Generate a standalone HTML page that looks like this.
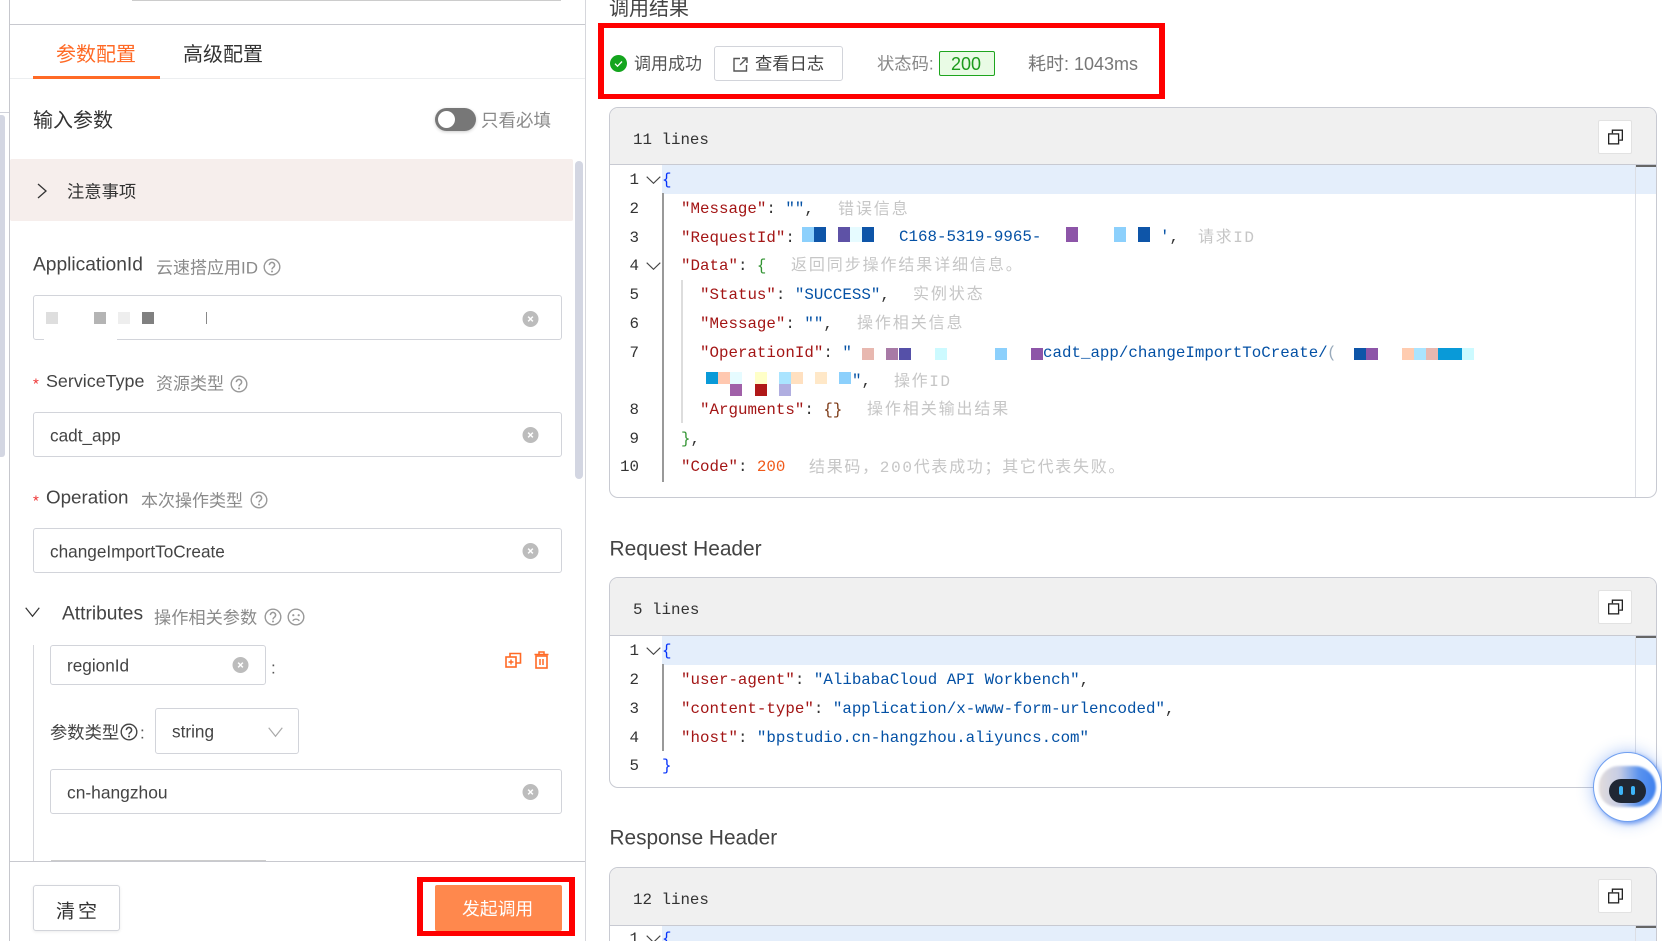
<!DOCTYPE html>
<html lang="zh"><head><meta charset="utf-8"><title>调用结果</title>
<style>
html,body{margin:0;padding:0;width:1662px;height:941px;overflow:hidden;background:#fff}
body{position:relative;font-family:"Liberation Sans","Noto Sans CJK SC",sans-serif;color:#333}
.t{position:absolute;white-space:nowrap;line-height:1;transform:translateY(-50%)}
.b{position:absolute;box-sizing:border-box}
.inp{position:absolute;box-sizing:border-box;border:1px solid #d2d4da;border-radius:3px;background:#fff}
.h{color:#8a8a8a;font-size:17px}
.l{color:#444;font-size:18.5px}
.v{color:#444;font-size:17.2px}
.r{color:#e33;font-size:15px}
.m{position:absolute;font-family:"Liberation Mono","Noto Sans CJK SC",monospace;font-size:15.82px;line-height:1;white-space:pre;transform:translateY(-50%);color:#333}
.n{left:601px;width:38px;text-align:right;color:#333}
.k{color:#a31515}.s{color:#0451a5}
.c{color:#c6c6c6;font-size:16px;letter-spacing:1.9px}
.box{position:absolute;left:609px;width:1048px;box-sizing:border-box;border:1px solid #c8cad2;border-radius:9px;overflow:hidden;background:#fff}
.head{position:absolute;left:0;top:0;right:0;background:#f0f0f0;border-bottom:1px solid #c8cad2}
.hl{position:absolute;left:52px;right:0;height:29px;background:#e4eefb}
.min{position:absolute;left:1025px;width:1px;bottom:0;background:#dcdee4}
.mark{position:absolute;left:1026px;right:0;height:2px;background:#666}
.cp{position:absolute;left:1598px;width:34px;height:34px;background:#fff;border:1px solid #e2e2e2;border-radius:2px;box-sizing:border-box}
.g{position:absolute;width:1.5px}
svg{position:absolute;overflow:visible}
.q{position:absolute;width:12px;height:12px}
</style></head><body>
<svg width="0" height="0" style="position:absolute"><defs>
<symbol id="help" viewBox="0 0 18 18"><circle cx="9" cy="9" r="7.8" fill="none" stroke="currentColor" stroke-width="1.4"/><path d="M6.4 7.1a2.6 2.6 0 1 1 4.2 2c-.9.7-1.6 1.1-1.6 2.3" fill="none" stroke="currentColor" stroke-width="1.5"/><circle cx="9" cy="13.5" r="1" fill="currentColor"/></symbol>
<symbol id="clr" viewBox="0 0 17 17"><circle cx="8.5" cy="8.5" r="8.5" fill="#bcbcbc"/><path d="M6 6l5 5M11 6l-5 5" stroke="#fff" stroke-width="1.6"/></symbol>
<symbol id="copy" viewBox="0 0 16 16"><rect x=".7" y="4.7" width="10.6" height="10.6" fill="none" stroke="#222" stroke-width="1.4"/><path d="M4.7 4V.7h10.6v10.6H12" fill="none" stroke="#222" stroke-width="1.4"/></symbol>
<symbol id="chev" viewBox="0 0 15 8"><path d="M.7.7l6.8 6.6L14.3.7" fill="none" stroke="#444" stroke-width="1.1"/></symbol>
</defs></svg>

<!-- left panel frame -->
<div class="b" style="left:9px;top:0;width:1px;height:941px;background:#c6c7cd"></div>
<div class="b" style="left:585px;top:0;width:1px;height:941px;background:#d6d7dc"></div>
<div class="b" style="left:132px;top:0;width:429px;height:1px;background:#ccc"></div>
<div class="b" style="left:10px;top:24px;width:575px;height:1px;background:#c8c9cf"></div>
<div class="b" style="left:0;top:112px;width:9px;height:1px;background:#d0d2da"></div>
<div class="b" style="left:0;top:115px;width:5px;height:342px;background:#d3d6e2;border-radius:0 3px 3px 0"></div>
<div class="b" style="left:575px;top:161px;width:8px;height:318px;background:#d3d6e2;border-radius:4px"></div>

<!-- tabs -->
<div class="t" style="left:56px;top:55px;font-size:20px;color:#ff6a26">参数配置</div>
<div class="t" style="left:183px;top:55px;font-size:20px;color:#333">高级配置</div>
<div class="b" style="left:10px;top:78px;width:575px;height:1px;background:#eceef0"></div>
<div class="b" style="left:33px;top:76px;width:127px;height:3px;background:#ff6a26"></div>

<div class="t" style="left:33px;top:121px;font-size:20px;color:#333">输入参数</div>
<div class="b" style="left:435px;top:108px;width:41px;height:23px;background:#777;border-radius:12px;box-shadow:0 1px 3px rgba(0,0,0,.2)"><div class="b" style="left:3px;top:3px;width:17px;height:17px;background:#fff;border-radius:50%"></div></div>
<div class="t" style="left:481px;top:121px;font-size:17.5px;color:#8a8a8a">只看必填</div>

<div class="b" style="left:10px;top:159px;width:563px;height:62px;background:#f6eeec;border-radius:2px"></div>
<svg style="left:37px;top:183px" width="10" height="16"><path d="M1 1l8 7-8 7" fill="none" stroke="#333" stroke-width="1.3"/></svg>
<div class="t" style="left:67px;top:192px;font-size:17.3px;color:#333">注意事项</div>

<!-- ApplicationId -->
<div class="t l" style="left:33px;top:265px;font-size:19.2px">ApplicationId</div>
<div class="t h" style="left:156px;top:268px">云速搭应用ID</div>
<svg style="left:263px;top:258px;color:#999" width="18" height="18"><use href="#help"/></svg>
<div class="inp" style="left:33px;top:295px;width:529px;height:45px"></div>
<div class="b" style="left:44px;top:338px;width:73px;height:3px;background:#fff"></div>
<div class="b" style="left:46px;top:312px;width:12px;height:12px;background:#dedede"></div>
<div class="b" style="left:94px;top:312px;width:12px;height:12px;background:#b4b4b4"></div>
<div class="b" style="left:118px;top:312px;width:12px;height:12px;background:#eee"></div>
<div class="b" style="left:142px;top:312px;width:12px;height:12px;background:#808080"></div>
<div class="b" style="left:206px;top:312px;width:1px;height:12px;background:#888"></div>
<svg style="left:522px;top:311px" width="17" height="16"><use href="#clr"/></svg>

<!-- ServiceType -->
<div class="t r" style="left:33px;top:384px">*</div>
<div class="t l" style="left:46px;top:382px;font-size:17.9px">ServiceType</div>
<div class="t h" style="left:156px;top:384px">资源类型</div>
<svg style="left:230px;top:375px;color:#999" width="18" height="18"><use href="#help"/></svg>
<div class="inp" style="left:33px;top:412px;width:529px;height:45px"></div>
<div class="t v" style="left:50px;top:436px">cadt_app</div>
<svg style="left:522px;top:427px" width="17" height="16"><use href="#clr"/></svg>

<!-- Operation -->
<div class="t r" style="left:33px;top:501px">*</div>
<div class="t l" style="left:46px;top:498px;font-size:18.8px">Operation</div>
<div class="t h" style="left:141px;top:501px">本次操作类型</div>
<svg style="left:250px;top:491px;color:#999" width="18" height="18"><use href="#help"/></svg>
<div class="inp" style="left:33px;top:528px;width:529px;height:45px"></div>
<div class="t v" style="left:50px;top:552px">changeImportToCreate</div>
<svg style="left:522px;top:543px" width="17" height="16"><use href="#clr"/></svg>

<!-- Attributes -->
<svg style="left:25px;top:607px" width="15" height="10"><path d="M.7.7l6.8 8.6L14.3.7" fill="none" stroke="#333" stroke-width="1.2"/></svg>
<div class="t l" style="left:62px;top:614px;font-size:19.2px">Attributes</div>
<div class="t h" style="left:154px;top:618px;font-size:17.2px">操作相关参数</div>
<svg style="left:264px;top:608px;color:#999" width="18" height="18"><use href="#help"/></svg>
<svg style="left:287px;top:608px" width="18" height="18" viewBox="0 0 18 18"><circle cx="9" cy="9" r="7.8" fill="none" stroke="#999" stroke-width="1.4"/><circle cx="6.3" cy="7.2" r="1.1" fill="#999"/><circle cx="11.7" cy="7.2" r="1.1" fill="#999"/><path d="M5.7 12.8c1.8-2.2 4.8-2.2 6.6 0" fill="none" stroke="#999" stroke-width="1.3"/></svg>
<div class="b" style="left:33px;top:645px;width:1px;height:216px;background:#d6d7dc"></div>

<div class="inp" style="left:50px;top:645px;width:216px;height:40px"></div>
<div class="t v" style="left:67px;top:666px">regionId</div>
<svg style="left:232px;top:657px" width="17" height="16"><use href="#clr"/></svg>
<div class="t" style="left:271px;top:668px;font-size:17px;color:#555">:</div>
<svg style="left:505px;top:652px" width="17" height="16" viewBox="0 0 17 16"><rect x="1" y="5" width="10" height="10" fill="#fff" stroke="#ff6a26" stroke-width="1.6"/><path d="M5 5V1.5h10.500v9.500H11" fill="none" stroke="#ff6a26" stroke-width="1.6"/><path d="M3.500 10h5M6 7.500v5" stroke="#ff6a26" stroke-width="1.4"/></svg>
<svg style="left:534px;top:651px" width="15" height="18" viewBox="0 0 15 18"><path d="M.5 3.500h14M5 3.500V1h5v2.500" fill="none" stroke="#ff6a26" stroke-width="1.5"/><rect x="2" y="5" width="11" height="12" fill="none" stroke="#ff6a26" stroke-width="1.6"/><path d="M6 8v6M9 8v6" stroke="#ff6a26" stroke-width="1.5"/></svg>

<div class="t" style="left:50px;top:733px;font-size:17.3px;color:#444">参数类型</div>
<svg style="left:120px;top:723px;color:#444" width="18" height="18"><use href="#help"/></svg>
<div class="t" style="left:140px;top:733px;font-size:17px;color:#555">:</div>
<div class="inp" style="left:155px;top:708px;width:144px;height:46px"></div>
<div class="t v" style="left:172px;top:732px">string</div>
<svg style="left:268px;top:727px" width="15" height="10"><path d="M.7.7l6.800 8.600L14.300.7" fill="none" stroke="#aaa" stroke-width="1.2"/></svg>

<div class="inp" style="left:50px;top:769px;width:512px;height:45px"></div>
<div class="t v" style="left:67px;top:793px;font-size:17.4px">cn-hangzhou</div>
<svg style="left:522px;top:784px" width="17" height="16"><use href="#clr"/></svg>

<div class="b" style="left:51px;top:860px;width:215px;height:1px;background:#ccc"></div>
<div class="b" style="left:10px;top:861px;width:575px;height:1px;background:#c8c9cf"></div>

<div class="inp" style="left:33px;top:885px;width:87px;height:46px;box-shadow:0 1px 3px rgba(0,0,0,.08)"></div>
<div class="t" style="left:56px;top:912px;font-size:19px;color:#333;letter-spacing:3px">清空</div>
<div class="b" style="left:417px;top:877px;width:158px;height:59px;border:5px solid #f00;border-left-width:6px;border-right-width:6px"></div>
<div class="b" style="left:435px;top:885px;width:127px;height:46px;background:#ff884d;border-radius:2px"></div>
<div class="t" style="left:462px;top:910px;font-size:17.8px;color:#fff">发起调用</div>

<!-- right top -->
<div class="t" style="left:609px;top:9px;font-size:20px;color:#444">调用结果</div>
<div class="b" style="left:598px;top:23px;width:567px;height:76px;border:5px solid #f00;border-left-width:6px;border-right-width:6px"></div>
<svg style="left:610px;top:55px" width="17" height="17" viewBox="0 0 17 17"><circle cx="8.500" cy="8.500" r="8.500" fill="#14a51e"/><path d="M5 8.700l2.500 2.500 4.500-4.700" fill="none" stroke="#fff" stroke-width="1.3"/></svg>
<div class="t" style="left:634px;top:64px;font-size:17px;color:#555">调用成功</div>
<div class="inp" style="left:714px;top:46px;width:129px;height:35px"></div>
<svg style="left:733px;top:57px" width="15" height="15" viewBox="0 0 15 15"><path d="M7 1.500H1v12.500h12.500V8M9 1h5v5M14 1L7 8" fill="none" stroke="#555" stroke-width="1.4"/></svg>
<div class="t" style="left:755px;top:64px;font-size:17.3px;color:#444">查看日志</div>
<div class="t" style="left:877px;top:64px;font-size:17.300px;color:#888">状态码:</div>
<div class="b" style="left:939px;top:51px;width:56px;height:25px;background:#e9fbe5;border:1px solid #1ea51e;border-radius:2px"></div>
<div class="t" style="left:951px;top:64px;font-size:18px;color:#1c9a1c">200</div>
<div class="t" style="left:1028px;top:64px;font-size:18px;color:#777">耗时: 1043ms</div>

<!-- box 1 -->
<div class="box" style="top:107px;height:391px">
  <div class="head" style="height:56px"></div>
  <div class="hl" style="top:57px"></div>
  <div class="min" style="top:57px"></div>
  <div class="mark" style="top:57px"></div>
</div>
<div class="cp" style="top:120px"><svg style="left:9px;top:8px" width="15" height="16"><use href="#copy"/></svg></div>
<div class="m" style="left:633px;top:141px">11 lines</div>
<div class="g" style="left:662px;top:193px;height:289px;background:#999"></div>
<div class="g" style="left:681px;top:280px;height:143px;background:#ddd"></div>
<svg style="left:646px;top:176px" width="15" height="8"><use href="#chev"/></svg>
<svg style="left:646px;top:262px" width="15" height="8"><use href="#chev"/></svg>

<div class="m n" style="top:181px">1</div><div class="m" style="left:662px;top:181px;color:#0431fa">{</div>
<div class="m n" style="top:210px">2</div><div class="m" style="left:681px;top:210px"><span class="k">"Message"</span>: <span class="s">""</span>,</div><div class="m c" style="left:838px;top:210px">错误信息</div>
<div class="m n" style="top:239px">3</div><div class="m" style="left:681px;top:239px"><span class="k">"RequestId"</span>:</div>
<div class="q" style="left:802px;top:227px;height:15px;background:#8cd0fc"></div><div class="q" style="left:814px;top:227px;height:15px;background:#0e55a8"></div><div class="q" style="left:838px;top:227px;height:15px;background:#5e52a6"></div><div class="q" style="left:850px;top:227px;height:15px;background:#e6fbff"></div><div class="q" style="left:862px;top:227px;height:15px;background:#0e55a8"></div>
<div class="m s" style="left:899px;top:238px">C168-5319-9965-</div>
<div class="q" style="left:1066px;top:227px;height:15px;background:#8d55a8"></div><div class="q" style="left:1114px;top:227px;height:15px;background:#8cd0fc"></div><div class="q" style="left:1138px;top:227px;height:15px;background:#0e55a8"></div>
<div class="m" style="left:1160px;top:238px"><span class="s">'</span>,</div><div class="m c" style="left:1198px;top:238px;letter-spacing:1.6px">请求ID</div>
<div class="m n" style="top:267px">4</div><div class="m" style="left:681px;top:267px"><span class="k">"Data"</span>: <span style="color:#319331">{</span></div><div class="m c" style="left:791px;top:266px">返回同步操作结果详细信息。</div>
<div class="m n" style="top:296px">5</div><div class="m" style="left:700px;top:296px"><span class="k">"Status"</span>: <span class="s">"SUCCESS"</span>,</div><div class="m c" style="left:913px;top:295px">实例状态</div>
<div class="m n" style="top:325px">6</div><div class="m" style="left:700px;top:325px"><span class="k">"Message"</span>: <span class="s">""</span>,</div><div class="m c" style="left:857px;top:324px">操作相关信息</div>
<div class="m n" style="top:354px">7</div><div class="m" style="left:700px;top:354px"><span class="k">"OperationId"</span>: <span class="s">"</span></div>
<div class="q" style="left:862px;top:348px;background:#e8b8b0"></div><div class="q" style="left:886px;top:348px;background:#a87aa6"></div><div class="q" style="left:899px;top:348px;background:#5550a8"></div><div class="q" style="left:935px;top:348px;background:#ccfaff"></div><div class="q" style="left:995px;top:348px;background:#8cd0fc"></div><div class="q" style="left:1031px;top:348px;background:#8d55a8"></div>
<div class="m s" style="left:1043px;top:354px">cadt_app/changeImportToCreate/</div><div class="m" style="left:1327px;top:354px;color:#9ab">(</div>
<div class="q" style="left:1354px;top:348px;background:#0e55a8"></div><div class="q" style="left:1366px;top:348px;background:#8d55a8"></div><div class="q" style="left:1402px;top:348px;background:#ffccb0"></div><div class="q" style="left:1414px;top:348px;background:#aae4ff"></div><div class="q" style="left:1426px;top:348px;background:#e8b8b0"></div><div class="q" style="left:1438px;top:348px;width:24px;background:#099ad8"></div><div class="q" style="left:1462px;top:348px;background:#ccfaff"></div>
<div class="q" style="left:706px;top:372px;background:#099ad8"></div><div class="q" style="left:718px;top:372px;background:#ffc8b0"></div><div class="q" style="left:730px;top:372px;background:#e6fbff"></div><div class="q" style="left:755px;top:372px;background:#ffffc8"></div><div class="q" style="left:779px;top:372px;background:#aae4ff"></div><div class="q" style="left:791px;top:372px;background:#ffe0c0"></div><div class="q" style="left:815px;top:372px;background:#ffe8c8"></div><div class="q" style="left:839px;top:372px;background:#8cd0fc"></div>
<div class="q" style="left:730px;top:384px;background:#a060a8"></div><div class="q" style="left:755px;top:384px;background:#b01818"></div><div class="q" style="left:779px;top:384px;background:#b0aee0"></div>
<div class="m" style="left:852px;top:382px"><span class="s">"</span>,</div><div class="m c" style="left:894px;top:382px;letter-spacing:1.6px">操作ID</div>
<div class="m n" style="top:411px">8</div><div class="m" style="left:700px;top:411px"><span class="k">"Arguments"</span>: <span style="color:#7b3814">{}</span></div><div class="m c" style="left:867px;top:410px">操作相关输出结果</div>
<div class="m n" style="top:440px">9</div><div class="m" style="left:681px;top:440px"><span style="color:#319331">}</span>,</div>
<div class="m n" style="top:468px">10</div><div class="m" style="left:681px;top:468px"><span class="k">"Code"</span>: <span style="color:#f05a1a">200</span></div><div class="m c" style="left:809px;top:468px;letter-spacing:1.7px">结果码，200代表成功；其它代表失败。</div>

<!-- box 2 -->
<div class="t" style="left:609.500px;top:550px;font-size:20.900px;color:#444">Request Header</div>
<div class="box" style="top:577px;height:211px">
  <div class="head" style="height:57px"></div>
  <div class="hl" style="top:58px"></div>
  <div class="min" style="top:58px"></div>
  <div class="mark" style="top:58px"></div>
</div>
<div class="cp" style="top:590px"><svg style="left:9px;top:8px" width="15" height="16"><use href="#copy"/></svg></div>
<div class="m" style="left:633px;top:611px">5 lines</div>
<div class="g" style="left:662px;top:664px;height:87px;background:#999"></div>
<svg style="left:646px;top:647px" width="15" height="8"><use href="#chev"/></svg>
<div class="m n" style="top:652px">1</div><div class="m" style="left:662px;top:652px;color:#0431fa">{</div>
<div class="m n" style="top:681px">2</div><div class="m" style="left:681px;top:681px"><span class="k">"user-agent"</span>: <span class="s">"AlibabaCloud API Workbench"</span>,</div>
<div class="m n" style="top:710px">3</div><div class="m" style="left:681px;top:710px"><span class="k">"content-type"</span>: <span class="s">"application/x-www-form-urlencoded"</span>,</div>
<div class="m n" style="top:739px">4</div><div class="m" style="left:681px;top:739px"><span class="k">"host"</span>: <span class="s">"bpstudio.cn-hangzhou.aliyuncs.com"</span></div>
<div class="m n" style="top:767px">5</div><div class="m" style="left:662px;top:767px;color:#0431fa">}</div>

<!-- box 3 -->
<div class="t" style="left:609.500px;top:839px;font-size:20.800px;color:#444">Response Header</div>
<div class="box" style="top:867px;height:120px">
  <div class="head" style="height:57px"></div>
  <div class="hl" style="top:58px"></div>
  <div class="min" style="top:58px"></div>
  <div class="mark" style="top:58px"></div>
</div>
<div class="cp" style="top:879px"><svg style="left:9px;top:8px" width="15" height="16"><use href="#copy"/></svg></div>
<div class="m" style="left:633px;top:901px">12 lines</div>
<svg style="left:646px;top:935px" width="15" height="8"><use href="#chev"/></svg>
<div class="m n" style="top:940px">1</div><div class="m" style="left:662px;top:940px;color:#0431fa">{</div>

<!-- bot -->
<div class="b" style="left:1593px;top:752px;width:69px;height:70px;background:#fff;border-radius:50%;border:1.5px solid #6f9ff0;box-shadow:0 0 14px 3px rgba(70,130,240,.3),2px 2px 4px rgba(50,110,235,.6)"></div>
<div class="b" style="left:1599px;top:766px;width:57px;height:41px;border-radius:24px 26px 24px 22px;background:linear-gradient(90deg,#e2dcdc 0%,#c7cde4 35%,#5b93ee 70%,#3d80ee 100%);filter:blur(1px)"></div>
<div class="b" style="left:1609px;top:779px;width:37px;height:24px;background:#1f2734;border-radius:12px"></div>
<div class="b" style="left:1619px;top:786px;width:4px;height:9px;background:#3db4f8;border-radius:2px"></div>
<div class="b" style="left:1631px;top:786px;width:4px;height:9px;background:#3db4f8;border-radius:2px"></div>
</body></html>
